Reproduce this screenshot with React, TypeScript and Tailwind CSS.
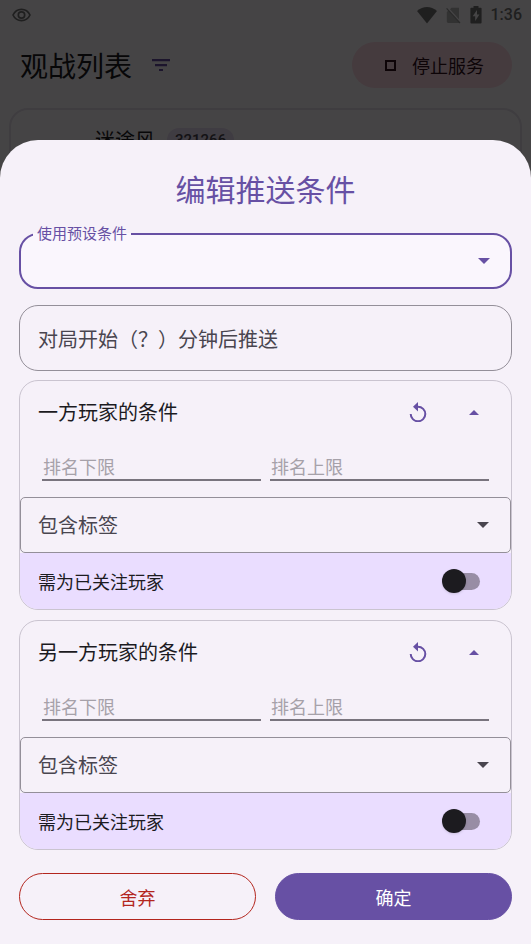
import { useState } from "react";

type PlayerCardProps = {
  id: string;
  title: string;
};

function StatusBar() {
  return (
    <div className="flex h-[30px] items-center justify-between pl-3 pr-[9px] text-[#757575]">
      <svg width="19" height="14" viewBox="0 0 19 14" fill="none" stroke="currentColor" strokeWidth="1.7">
        <path d="M1 7C2.8 3.2 6 1.4 9.5 1.4S16.200 3.2 18 7c-1.800 3.800-5 5.600-8.500 5.600S2.800 10.800 1 7Z" />
        <circle cx="9.500" cy="7" r="3.200" />
      </svg>
      <div className="flex items-center gap-[9px]">
        <svg width="20" height="17" viewBox="0 0 20 17" fill="currentColor">
          <path d="M0 4C6-1.300 14-1.300 20 4L10 16.500Z" />
        </svg>
        <svg width="15" height="17" viewBox="0 0 15 17" fill="#b8b8b8">
          <path d="M4 2.200 5.500 0.800H13V12.200ZM0.800 5 2.600 3.600 13 15.200V16H2.200Q0.800 16 0.800 14.600Z" />
          <path d="M0.600 1.400 14 16" stroke="#9a9a9a" strokeWidth="1.200" />
        </svg>
        <svg width="12" height="18" viewBox="0 0 12 18" fill="currentColor">
          <path
            fillRule="evenodd"
            d="M3.500 0h5v1.700h2.200q.9 0 .9.900V16.600q0 .9-.9.900H1.300q-.9 0-.9-.9V2.600q0-.9.900-.9h2.200ZM7 4 2.700 10.300h2.500V15L9.400 8.500H7Z"
          />
        </svg>
        <span className="font-[Roboto,sans-serif] text-base font-medium leading-5">1:36</span>
      </div>
    </div>
  );
}

function WatchPage() {
  return (
    <div className="min-h-screen bg-[#fffbff] text-[#1c1b1f]">
      <StatusBar />
      <header className="flex items-center justify-between pl-5 pr-[19px] pt-3">
        <div className="flex items-center gap-5">
          <h1 className="text-[28px] leading-10">观战列表</h1>
          <button aria-label="筛选" className="text-[#6750a4]">
            <svg width="18" height="12" viewBox="0 0 18 12" fill="currentColor">
              <path d="M0 0h18v2.200H0ZM3 5h12v2.200H3ZM7 10h4v2H7Z" />
            </svg>
          </button>
        </div>
        <button className="flex h-[46px] items-center gap-[15px] rounded-full bg-[#ffd8e4] pl-8 pr-7 text-lg text-[#31111d]">
          <svg width="13" height="13" viewBox="0 0 13 13" fill="none" stroke="currentColor" strokeWidth="2">
            <path d="M2 2h9v9H2Z" />
          </svg>
          停止服务
        </button>
      </header>
      <main className="px-[9px] pt-5">
        <div className="flex items-center gap-3 rounded-[19px] border-2 border-[#e7e0ec] px-[84px] pb-16 pt-[18px]">
          <span className="text-xl leading-6">迷途风</span>
          <span className="rounded-full bg-[#eaddf4] px-2 font-[Roboto,'Noto_Sans_CJK_SC',sans-serif] text-[15px] font-medium leading-6 text-[#49454f]">
            321266
          </span>
        </div>
      </main>
    </div>
  );
}

function DownArrow() {
  return (
    <svg
      className="pointer-events-none absolute right-[22px] top-1/2 -translate-y-1/2"
      width="12"
      height="6"
      viewBox="0 0 12 6"
      fill="currentColor"
    >
      <path d="M0 0h12L6 6Z" />
    </svg>
  );
}

function PlayerCard({ id, title }: PlayerCardProps) {
  const [open, setOpen] = useState(true);
  const [min, setMin] = useState("");
  const [max, setMax] = useState("");

  const reset = () => {
    setMin("");
    setMax("");
  };

  const inputClass =
    "h-[38px] w-full min-w-0 border-b-2 border-[#79747e] bg-transparent px-px pt-2.5 text-lg text-[#1c1b1f] outline-none placeholder:text-[#a6a1a9]";

  return (
    <section className="overflow-hidden rounded-[19px] border border-[#cac4d0]">
      <div className="flex h-[62px] items-center pl-[18px] pr-8">
        <h3 className="flex-1 text-xl">{title}</h3>
        <button aria-label="重置" onClick={reset} className="mr-[42px] text-[#6750a4]">
          <svg width="18" height="20" viewBox="0 0 18 20">
            <path d="M1.700 12A7.300 7.300 0 1 0 9 4.700" fill="none" stroke="currentColor" strokeWidth="2" />
            <path d="M4 4.800 9 0v9.600Z" fill="currentColor" />
          </svg>
        </button>
        <button aria-label="展开" aria-expanded={open} onClick={() => setOpen(!open)} className="text-[#6750a4]">
          <svg width="10" height="5" viewBox="0 0 10 5" fill="currentColor">
            <path d="M0 5h10L5 0Z" />
          </svg>
        </button>
      </div>
      {open && (
        <>
          <div className="flex gap-[9px] px-[22px] pb-4">
            <input aria-label="排名下限" placeholder="排名下限" value={min} onChange={(e) => setMin(e.target.value)} className={inputClass} />
            <input aria-label="排名上限" placeholder="排名上限" value={max} onChange={(e) => setMax(e.target.value)} className={inputClass} />
          </div>
          <div className="relative text-[#49454f]">
            <select
              aria-label="包含标签"
              className="block h-14 w-full appearance-none rounded-[5px] border border-[#948f99] bg-transparent px-[17px] text-xl outline-none"
            >
              <option>包含标签</option>
            </select>
            <DownArrow />
          </div>
          <label htmlFor={id} className="flex h-14 items-center justify-between bg-[#eaddff] pl-[18px] pr-[31px] text-lg">
            需为已关注玩家
            <span className="relative flex h-6 w-[38px] items-center">
              <input id={id} type="checkbox" className="peer ml-1 h-[17px] w-[34px] appearance-none rounded-full bg-[#988da5]" />
              <span className="pointer-events-none absolute left-0 top-0 size-6 rounded-full bg-[#1c1b1f] shadow peer-checked:left-[14px] peer-checked:bg-[#6750a4]" />
            </span>
          </label>
        </>
      )}
    </section>
  );
}

export default function App() {
  return (
    <div className="relative min-h-screen overflow-hidden font-['Noto_Sans_CJK_SC',sans-serif] text-[#1c1b1f]">
      <WatchPage />
      {/* Scrim with the bottom sheet */}
      <div className="fixed inset-0 flex flex-col justify-end bg-black/73">
        <div role="dialog" aria-labelledby="sheet-title" className="rounded-t-[38px] bg-[#f6f1f9] px-[19px] pb-6 pt-7">
          <h2 id="sheet-title" className="text-center text-[30px] leading-10 text-[#6750a4]">
            编辑推送条件
          </h2>

          <div className="relative mt-[25px] text-[#6750a4]">
            <select
              id="preset"
              className="block h-14 w-full appearance-none rounded-[19px] border-2 border-[#6750a4] bg-[#faf6fd] px-4 text-lg outline-none"
            >
              <option></option>
            </select>
            <label htmlFor="preset" className="absolute -top-2 left-[14px] bg-linear-to-b from-[#f6f1f9] from-50% to-[#faf6fd] to-50% px-1 text-[15px] leading-4">
              使用预设条件
            </label>
            <DownArrow />
          </div>

          <input
            aria-label="对局开始（？）分钟后推送"
            placeholder="对局开始（？）分钟后推送"
            className="mt-4 block h-[66px] w-full rounded-[19px] border border-[#948f99] bg-transparent px-[18px] text-xl outline-none placeholder:text-[#49454f]"
          />

          <div className="mt-[9px] flex flex-col gap-[10px]">
            <PlayerCard id="followed-a" title="一方玩家的条件" />
            <PlayerCard id="followed-b" title="另一方玩家的条件" />
          </div>

          <div className="mt-[23px] flex gap-[19px] text-lg">
            <button className="h-[47px] flex-1 rounded-full border border-[#b3261e] text-[#b3261e]">舍弃</button>
            <button className="h-[47px] flex-1 rounded-full border border-[#6750a4] bg-[#6750a4] text-white">确定</button>
          </div>
        </div>
      </div>
    </div>
  );
}
